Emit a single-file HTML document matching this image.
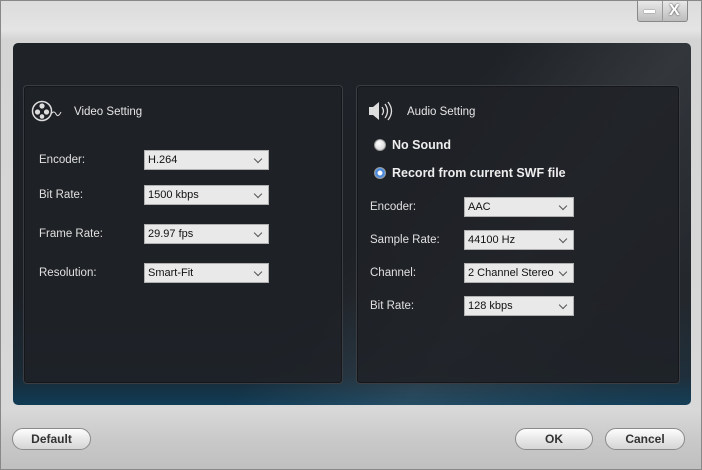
<!DOCTYPE html>
<html><head><style>
*{margin:0;padding:0;box-sizing:border-box}
html{width:702px;height:470px;overflow:hidden}
body{width:702px;height:470px;overflow:hidden;font-family:"Liberation Sans",sans-serif;background:linear-gradient(#dcdcdc 0,#e4e4e4 30px,#d4d4d4 40px,#d8d8d8 410px,#c9c9c9 440px,#bfbfbf 470px);position:relative;border:1px solid #888}
.dark{position:absolute;left:12px;top:42px;width:678px;height:362px;border-radius:5px;background:linear-gradient(180deg,#1f2328 0,#1d2126 70%,#1a2a36 92%,#0f3b55 100%);overflow:hidden}
.shine{position:absolute;left:330px;top:-60px;width:480px;height:700px;background:linear-gradient(90deg,rgba(255,255,255,0) 0,rgba(255,255,255,0.09) 30%,rgba(255,255,255,0.03) 60%,rgba(255,255,255,0));transform:rotate(38deg)}
.grp{position:absolute;border:1px solid #3a3e44;border-radius:4px;background:rgba(30,33,38,0.85);box-shadow:inset 0 0 0 1px #15171a}
.t{position:absolute;color:#e6e6e6;font-size:11.5px}
.lab{position:absolute;color:#e0e0e0;font-size:11.5px;margin-top:1px}
.sel{position:absolute;height:20px;background:#e9e9e9;border:1px solid #b0b0b0;color:#111;font-size:11px;line-height:18px;padding-left:3px;white-space:nowrap;overflow:hidden}
.sel:after{content:"";position:absolute;right:7px;top:5px;width:5px;height:5px;border-right:1px solid #555;border-bottom:1px solid #555;transform:rotate(45deg)}
.btn{position:absolute;height:22px;border:1px solid #8a8a8a;border-radius:11px;background:linear-gradient(#fdfdfd,#e8e8e8 50%,#d6d6d6);font-size:12px;font-weight:bold;color:#333;text-align:center;line-height:20px}
.rad{position:absolute;width:12px;height:12px;border-radius:50%;border:1px solid #999;background:radial-gradient(circle at 40% 35%,#fff,#ccc)}
.radon{background:radial-gradient(circle,#fff 0 2px,#3a7bd5 3px,#7fb0f0 6px)}
.rt{position:absolute;color:#eee;font-size:12.5px;font-weight:bold}
</style></head><body>
<div style="position:absolute;left:636px;top:0;width:51px;height:21px;border:1px solid #888;border-top:none;border-radius:0 0 3px 3px;background:linear-gradient(#e8e8e8,#bdbdbd)"></div>
<div style="position:absolute;left:661px;top:0;width:1px;height:21px;background:#999"></div>
<div style="position:absolute;left:643px;top:9px;width:11px;height:3px;background:#fff;box-shadow:0 0 1px #333"></div>
<div style="position:absolute;left:668px;top:1px;color:#fff;font-weight:bold;font-size:16px;text-shadow:0 0 2px #333">X</div>
<div class="dark"><div class="shine"></div></div>
<div class="grp" style="left:22px;top:84px;width:320px;height:299px"></div>
<div class="grp" style="left:355px;top:84px;width:324px;height:299px"></div>
<svg style="position:absolute;left:30px;top:99px" width="34" height="24" viewBox="0 0 34 24"><circle cx="11" cy="11" r="9.5" fill="none" stroke="#ddd" stroke-width="1.5"/><circle cx="11" cy="6" r="2.6" fill="#ddd"/><circle cx="6.5" cy="12" r="2.6" fill="#ddd"/><circle cx="15.5" cy="12" r="2.6" fill="#ddd"/><circle cx="11" cy="16.5" r="2.3" fill="#ddd"/><path d="M20 14 q3 -4 5 0 t5 -2" fill="none" stroke="#ddd" stroke-width="1"/></svg>
<div class="t" style="left:73px;top:105px">Video Setting</div>
<svg style="position:absolute;left:366px;top:98px" width="28" height="24" viewBox="0 0 28 24"><path d="M2 8h4l6-5v18l-6-5H2z" fill="#ddd"/><path d="M15 8q3 4 0 8M18 5q5 7 0 14M21 3q7 9 0 18" fill="none" stroke="#ddd" stroke-width="1.3"/></svg>
<div class="t" style="left:406px;top:105px">Audio Setting</div>
<div class="lab" style="left:38px;top:152px">Encoder:</div><div class="sel" style="left:143px;top:149px;width:125px">H.264</div>
<div class="lab" style="left:38px;top:187px">Bit Rate:</div><div class="sel" style="left:143px;top:184px;width:125px">1500 kbps</div>
<div class="lab" style="left:38px;top:226px">Frame Rate:</div><div class="sel" style="left:143px;top:223px;width:125px">29.97 fps</div>
<div class="lab" style="left:38px;top:265px">Resolution:</div><div class="sel" style="left:143px;top:262px;width:125px">Smart-Fit</div>
<div class="rad" style="left:373px;top:138px"></div><div class="rt" style="left:391px;top:137px">No Sound</div>
<div class="rad radon" style="left:373px;top:166px"></div><div class="rt" style="left:391px;top:165px">Record from current SWF file</div>
<div class="lab" style="left:369px;top:199px">Encoder:</div><div class="sel" style="left:463px;top:196px;width:110px">AAC</div>
<div class="lab" style="left:369px;top:232px">Sample Rate:</div><div class="sel" style="left:463px;top:229px;width:110px">44100 Hz</div>
<div class="lab" style="left:369px;top:265px">Channel:</div><div class="sel" style="left:463px;top:262px;width:110px">2 Channel Stereo</div>
<div class="lab" style="left:369px;top:298px">Bit Rate:</div><div class="sel" style="left:463px;top:295px;width:110px">128 kbps</div>
<div class="btn" style="left:11px;top:427px;width:79px">Default</div>
<div class="btn" style="left:514px;top:427px;width:78px">OK</div>
<div class="btn" style="left:604px;top:427px;width:80px">Cancel</div>
</body></html>
